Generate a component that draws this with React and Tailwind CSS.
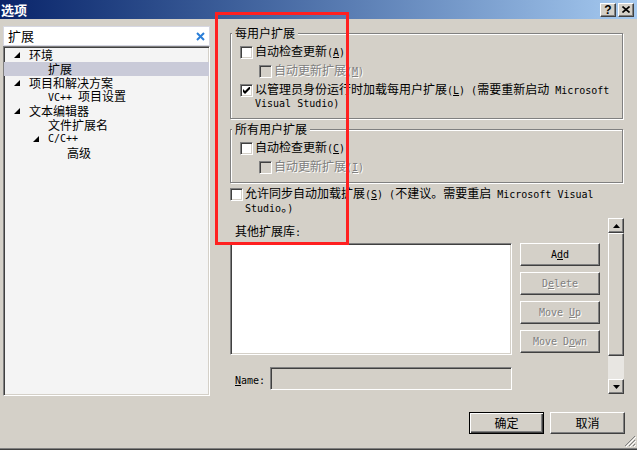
import React from "react";

function Mono({ children, className = "" }) {
  return <span className={"font-['DejaVu_Sans_Mono',monospace] text-[10px] " + className}>{children}</span>;
}

function CheckBox({ checked, disabled }) {
  return (
    <span
      className={
        "inline-flex w-[13px] h-[13px] shrink-0 items-center justify-center border border-t-[#808080] border-l-[#808080] border-r-white border-b-white shadow-[inset_1px_1px_0_#404040,inset_-1px_-1px_0_#d4d0c8] " +
        (disabled ? "bg-[#d4d0c8]" : "bg-white")
      }
    >
      {checked && (
        <svg width="7" height="7" viewBox="0 0 7 7">
          <path d="M0 2 L2 4 L7 -1 L7 2 L2 7 L0 5 Z" fill="#000" />
        </svg>
      )}
    </span>
  );
}

function Tri() {
  return (
    <svg width="6" height="6" viewBox="0 0 6 6" className="shrink-0">
      <polygon points="6,0 6,6 0,6" fill="#000" />
    </svg>
  );
}

function Group({ label, height, children }) {
  return (
    <div className={"relative w-[393px] border border-[#808080] shadow-[inset_1px_1px_0_#fff,1px_1px_0_#fff] pl-[9px] pt-[11px] " + height}>
      <span className="absolute -top-[7px] left-[1px] px-[3px] bg-[#d4d0c8] leading-[12px]">{label}</span>
      {children}
    </div>
  );
}

function Row({ children, className = "" }) {
  return <div className={"flex items-center h-[14px] leading-[14px] whitespace-nowrap " + className}>{children}</div>;
}

function Btn({ children, disabled, className = "" }) {
  return (
    <div
      className={
        "flex items-center justify-center bg-[#d4d0c8] border border-t-white border-l-white border-r-[#404040] border-b-[#404040] shadow-[inset_-1px_-1px_0_#808080] " +
        (disabled ? "text-[#808080] [text-shadow:1px_1px_0_#ffffff] " : "text-black ") +
        className
      }
    >
      {children}
    </div>
  );
}

function ScrollBtn({ down }) {
  return (
    <div className="h-[15px] w-[16px] flex items-center justify-center bg-[#d4d0c8] border border-t-white border-l-white border-r-[#404040] border-b-[#404040] shadow-[inset_-1px_-1px_0_#808080]">
      <svg width="7" height="4" viewBox="0 0 7 4">
        {down ? <polygon points="0,0 7,0 3.5,4" fill="#000" /> : <polygon points="0,4 7,4 3.5,0" fill="#000" />}
      </svg>
    </div>
  );
}

const disabledText = "text-[#808080] [text-shadow:1px_1px_0_#ffffff]";

export default function App() {
  return (
    <div className="relative w-[637px] h-[450px] overflow-hidden bg-[#d4d0c8] font-['Noto_Sans_CJK_SC',sans-serif] text-[12px] text-black flex flex-col">
      {/* Title bar */}
      <div className="h-[19px] shrink-0 flex items-center justify-between bg-linear-to-r from-[#0a246a] to-[#a6caf0] pl-[1px] pr-[3px]">
        <span className="text-white font-bold text-[13px] leading-[19px]">选项</span>
        <div className="flex gap-[2px]">
          <div className="w-[16px] h-[14px] flex items-center justify-center bg-[#d4d0c8] border border-t-white border-l-white border-r-[#404040] border-b-[#404040] shadow-[inset_-1px_-1px_0_#808080] font-['Liberation_Sans',sans-serif] font-bold text-[12px] leading-none">
            ?
          </div>
          <div className="w-[16px] h-[14px] flex items-center justify-center bg-[#d4d0c8] border border-t-white border-l-white border-r-[#404040] border-b-[#404040] shadow-[inset_-1px_-1px_0_#808080]">
            <svg width="8" height="7" viewBox="0 0 8 7">
              <path d="M0.5 0.5 L7.5 6.5 M7.5 0.5 L0.5 6.5" stroke="#000" strokeWidth="1.6" />
            </svg>
          </div>
        </div>
      </div>

      {/* Body */}
      <div className="flex flex-1">
        {/* Left pane */}
        <div className="ml-[3px] w-[207px] flex flex-col pt-[7px]">
          <div className="h-[20px] bg-white border border-[#d6d7e2] flex items-center justify-between pl-[4px] pr-[4px]">
            <span className="leading-[14px] text-[13px]">扩展</span>
            <svg width="9" height="9" viewBox="0 0 9 9">
              <path d="M1 1 L8 8 M8 1 L1 8" stroke="#2a7ed8" strokeWidth="2" />
            </svg>
          </div>
          <div className="h-[350px] bg-[#f4f4f4] border border-t-[#808080] border-l-[#808080] border-r-white border-b-white shadow-[inset_1px_1px_0_#404040,inset_-1px_-1px_0_#d4d0c8] pt-[1px]">
            <Row className="pl-[10px]">
              <Tri />
              <span className="ml-[9px]">环境</span>
            </Row>
            <Row className="pl-[44px] bg-[#c9cad8]">
              <span>扩展</span>
            </Row>
            <Row className="pl-[10px]">
              <Tri />
              <span className="ml-[9px]">项目和解决方案</span>
            </Row>
            <Row className="pl-[44px]">
              <span>
                <Mono>VC++ </Mono>项目设置
              </span>
            </Row>
            <Row className="pl-[10px]">
              <Tri />
              <span className="ml-[9px]">文本编辑器</span>
            </Row>
            <Row className="pl-[44px]">
              <span>文件扩展名</span>
            </Row>
            <Row className="pl-[29px]">
              <Tri />
              <Mono className="ml-[9px]">C/C++</Mono>
            </Row>
            <Row className="pl-[63px]">
              <span>高级</span>
            </Row>
          </div>
        </div>

        {/* Right pane */}
        <div className="ml-[20px] w-[395px] flex flex-col">
          <div className="mt-[14px]">
            <Group label="每用户扩展" height="h-[86px]">
              <Row>
                <CheckBox />
                <span className="ml-[2px]">
                  自动检查更新<Mono>(<u>A</u>)</Mono>
                </span>
              </Row>
              <Row className="mt-[5px] pl-[19px]">
                <CheckBox disabled />
                <span className={"ml-[2px] " + disabledText}>
                  自动更新扩展<Mono>(<u>M</u>)</Mono>
                </span>
              </Row>
              <Row className="mt-[5px]">
                <CheckBox checked />
                <span className="ml-[2px]">
                  以管理员身份运行时加载每用户扩展<Mono>(<u>L</u>) (</Mono>需要重新启动<Mono> Microsoft</Mono>
                </span>
              </Row>
              <Row className="pl-[15px]">
                <Mono>Visual Studio)</Mono>
              </Row>
            </Group>
          </div>
          <div className="mt-[10px]">
            <Group label="所有用户扩展" height="h-[54px]">
              <Row>
                <CheckBox />
                <span className="ml-[2px]">
                  自动检查更新<Mono>(<u>C</u>)</Mono>
                </span>
              </Row>
              <Row className="mt-[5px] pl-[19px]">
                <CheckBox disabled />
                <span className={"ml-[2px] " + disabledText}>
                  自动更新扩展<Mono>(<u>I</u>)</Mono>
                </span>
              </Row>
            </Group>
          </div>

          <Row className="mt-[4px]">
            <CheckBox />
            <span className="ml-[2px]">
              允许同步自动加载扩展<Mono>(<u>S</u>) (</Mono>不建议。需要重启<Mono> Microsoft Visual</Mono>
            </span>
          </Row>
          <Row className="pl-[15px]">
            <span>
              <Mono>Studio</Mono>。<Mono>)</Mono>
            </span>
          </Row>

          {/* Lower section */}
          <div className="mt-[2px] flex">
            <div className="w-[376px] flex flex-col">
              <Row className="mt-[8px] pl-[5px]">
                <span>
                  其他扩展库<Mono>:</Mono>
                </span>
              </Row>
              <div className="mt-[4px] h-[112px] flex">
                <div className="w-[282px] h-full bg-white border border-t-[#808080] border-l-[#808080] border-r-white border-b-white shadow-[inset_1px_1px_0_#404040,inset_-1px_-1px_0_#d4d0c8]" />
                <div className="ml-[8px] w-[80px] flex flex-col gap-[6px]">
                  <Btn className="h-[23px]">
                    <Mono>A<u>d</u>d</Mono>
                  </Btn>
                  <Btn disabled className="h-[23px]">
                    <Mono>D<u>e</u>lete</Mono>
                  </Btn>
                  <Btn disabled className="h-[23px]">
                    <Mono>Move <u>U</u>p</Mono>
                  </Btn>
                  <Btn disabled className="h-[23px]">
                    <Mono>Move D<u>o</u>wn</Mono>
                  </Btn>
                </div>
              </div>
              <div className="mt-[12px] h-[23px] flex items-center">
                <div className="w-[40px] pl-[5px]">
                  <Mono>
                    <u>N</u>ame:
                  </Mono>
                </div>
                <div className="w-[242px] h-full bg-[#d4d0c8] border border-t-[#808080] border-l-[#808080] border-r-white border-b-white shadow-[inset_1px_1px_0_#404040,inset_-1px_-1px_0_#d4d0c8]" />
              </div>
            </div>
            <div className="ml-[2px] w-[16px] flex flex-col pt-[1px]">
              <ScrollBtn />
              <div className="h-[123px] bg-[#d4d0c8] border border-t-white border-l-white border-r-[#404040] border-b-[#404040] shadow-[inset_-1px_-1px_0_#808080]" />
              <div className="h-[23px] bg-[#e8e6e2]" />
              <ScrollBtn down />
            </div>
          </div>

          {/* Dialog buttons */}
          <div className="mt-[18px] flex justify-end gap-[6px]">
            <div className="w-[75px] h-[22px] flex items-center justify-center bg-[#d4d0c8] border border-black shadow-[inset_1px_1px_0_#fff,inset_-1px_-1px_0_#404040,inset_-2px_-2px_0_#808080]">
              确定
            </div>
            <Btn className="w-[75px] h-[22px]">取消</Btn>
          </div>
        </div>
      </div>

      {/* Bottom edge */}
      <div className="h-[2px] shrink-0 border-t border-t-[#808080] border-b border-b-[#404040]" />

      {/* Resize grip */}
      <svg className="absolute right-[1px] bottom-[3px]" width="12" height="12" viewBox="0 0 12 12">
        <path d="M11 1 L1 11 M11 5 L5 11 M11 9 L9 11" stroke="#808080" strokeWidth="1" />
        <path d="M12 2 L2 12 M12 6 L6 12 M12 10 L10 12" stroke="#ffffff" strokeWidth="1" />
      </svg>

      {/* Red annotation rectangle */}
      <div className="absolute left-[215px] top-[12px] w-[134px] h-[233px] border-[3px] border-[#ff2020] pointer-events-none" />
    </div>
  );
}
